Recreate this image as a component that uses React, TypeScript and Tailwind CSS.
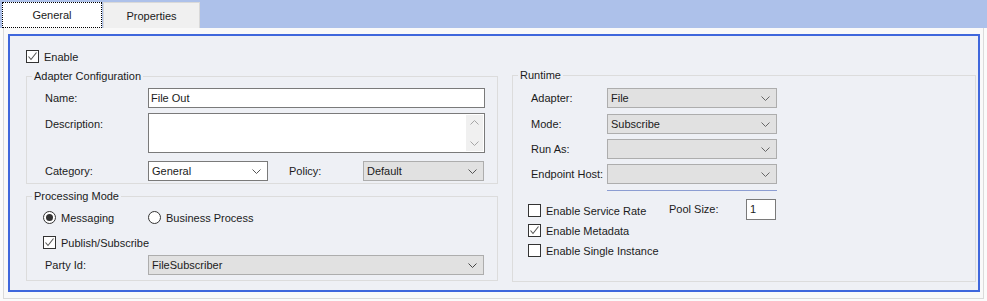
import React from "react";

const FONT = { fontFamily: '"Liberation Sans", Arial, sans-serif' };

function Chevron({ color = "#555" }: { color?: string }) {
    return (
        <svg width="9" height="5" viewBox="0 0 9 5" className="shrink-0">
            <path d="M0.5 0.5 L4.5 4.5 L8.5 0.5" fill="none" stroke={color} strokeWidth="1" />
        </svg>
    );
}

function Check({ checked }: { checked?: boolean }) {
    return (
        <span className="flex h-[13px] w-[13px] shrink-0 items-center justify-center border border-[#333] bg-white">
            {checked && (
                <svg width="11" height="11" viewBox="0 0 11 11">
                    <path d="M1.5 5.5 L4 8.5 L9.5 1.5" fill="none" stroke="#555" strokeWidth="1.1" />
                </svg>
            )}
        </span>
    );
}

function Radio({ checked }: { checked?: boolean }) {
    return (
        <span className="flex h-[13px] w-[13px] shrink-0 items-center justify-center rounded-full border border-[#333] bg-white">
            {checked && <span className="h-[7px] w-[7px] rounded-full bg-[#333]" />}
        </span>
    );
}

function Select({ value, width, disabled, chevron }: { value?: string; width: string; disabled?: boolean; chevron?: string }) {
    return (
        <div
            className={
                "flex h-[20px] items-center justify-between border pl-[3px] pr-[6px] " +
                width +
                (disabled ? " border-[#adadad] bg-[#e1e1e1]" : " border-[#7a7a7a] bg-white")
            }
        >
            <span className="leading-none">{value}</span>
            <Chevron color={chevron} />
        </div>
    );
}

function Group({ title, className, children }: { title: string; className: string; children: React.ReactNode }) {
    return (
        <fieldset className={"border border-[#dcdcdc] " + className}>
            <legend className="ml-[5px] px-[2px] text-[11px] leading-[16px]">{title}</legend>
            {children}
        </fieldset>
    );
}

export default function App() {
    return (
        <div className="h-[301px] w-[987px] overflow-hidden bg-[#fbfbfb] text-[11px] leading-[16px] text-[#1b1b1b]" style={FONT}>
            {/* Tabs */}
            <div className="flex h-[28px] items-end bg-[#adc1ea] pl-[2px]">
                <div className="flex h-[26px] w-[100px] items-center justify-center border border-dotted border-black bg-white">
                    General
                </div>
                <div className="ml-[1px] flex h-[26px] w-[97px] items-center justify-center border border-b-0 border-[#d9d9d9] bg-[#f0f0f0]">
                    Properties
                </div>
            </div>

            {/* Page */}
            <div className="ml-[3px] h-[271px] w-[981px] border border-t-0 border-[#dadada] bg-[#f9f9f9] pl-[4px] pt-[6px]">
                <div className="h-[258px] w-[972px] border-2 border-[#3f67dc] bg-[#eef0f5] pl-[16px] pt-[14px]">
                    <label className="flex h-[13px] items-center gap-[5px]">
                        <Check checked />
                        <span>Enable</span>
                    </label>

                    <div className="mt-[5px] flex gap-[14px]">
                        {/* Left column */}
                        <div className="flex w-[472px] flex-col gap-[4px]">
                            <Group title="Adapter Configuration" className="h-[116px]">
                                <div className="pl-[18px] pr-[12px] pt-[4px]">
                                    <div className="flex h-[20px] items-center">
                                        <span className="w-[103px]">Name:</span>
                                        <div className="flex h-[20px] flex-1 items-center border border-[#7a7a7a] bg-white pl-[2px]">File Out</div>
                                    </div>
                                    <div className="mt-[5px] flex">
                                        <span className="w-[103px] pt-[3px]">Description:</span>
                                        <div className="flex h-[40px] flex-1 justify-end border border-[#7a7a7a] bg-white p-[1px]">
                                            <div className="flex w-[17px] flex-col items-center justify-between bg-[#f0f0f0] py-[5px]">
                                                <svg width="9" height="5" viewBox="0 0 9 5">
                                                    <path d="M0.5 4.5 L4.5 0.5 L8.5 4.5" fill="none" stroke="#a6a6a6" />
                                                </svg>
                                                <svg width="9" height="5" viewBox="0 0 9 5">
                                                    <path d="M0.5 0.5 L4.5 4.5 L8.5 0.5" fill="none" stroke="#a6a6a6" />
                                                </svg>
                                            </div>
                                        </div>
                                    </div>
                                    <div className="mt-[8px] flex items-center">
                                        <span className="w-[103px]">Category:</span>
                                        <Select value="General" width="w-[120px]" />
                                        <span className="ml-[21px] w-[74px]">Policy:</span>
                                        <Select value="Default" width="w-[121px]" disabled />
                                    </div>
                                </div>
                            </Group>

                            <Group title="Processing Mode" className="h-[93px]">
                                <div className="pl-[16px] pr-[13px] pt-[7px]">
                                    <div className="flex h-[13px] items-center">
                                        <label className="flex w-[105px] items-center gap-[5px]">
                                            <Radio checked />
                                            <span>Messaging</span>
                                        </label>
                                        <label className="flex items-center gap-[5px]">
                                            <Radio />
                                            <span>Business Process</span>
                                        </label>
                                    </div>
                                    <label className="mt-[12px] flex h-[13px] items-center gap-[5px]">
                                        <Check checked />
                                        <span>Publish/Subscribe</span>
                                    </label>
                                    <div className="mt-[6px] flex items-center">
                                        <span className="w-[105px] pl-[2px]">Party Id:</span>
                                        <Select value="FileSubscriber" width="flex-1" disabled chevron="#444" />
                                    </div>
                                </div>
                            </Group>
                        </div>

                        {/* Right column */}
                        <Group title="Runtime" className="-mt-[1px] h-[215px] w-[464px]">
                            <div className="pl-[18px] pt-[5px]">
                                <div className="flex flex-col">
                                    {[
                                        ["Adapter:", "File", "mt-0"],
                                        ["Mode:", "Subscribe", "mt-[6px]"],
                                        ["Run As:", "", "mt-[5px]"],
                                        ["Endpoint Host:", "", "mt-[5px]"],
                                    ].map(([label, value, mt]) => (
                                        <div key={label} className={"flex items-center " + mt}>
                                            <span className="w-[76px] whitespace-nowrap">{label}</span>
                                            <Select value={value} width="w-[170px]" disabled chevron="#666" />
                                        </div>
                                    ))}
                                </div>
                                <div className="ml-[76px] mt-[6px] h-[1px] w-[170px] bg-[#8c9dd2]" />
                                <div className="mt-[8px] flex items-start">
                                    <div className="-ml-[3px] flex w-[141px] flex-col gap-[7px] pt-[5px]">
                                        {[
                                            ["Enable Service Rate", false],
                                            ["Enable Metadata", true],
                                            ["Enable Single Instance", false],
                                        ].map(([label, checked]) => (
                                            <label key={label as string} className="flex h-[13px] items-center gap-[5px] whitespace-nowrap">
                                                <Check checked={checked as boolean} />
                                                <span>{label as string}</span>
                                            </label>
                                        ))}
                                    </div>
                                    <div className="flex h-[20px] items-center">
                                        <span className="w-[77px]">Pool Size:</span>
                                        <div className="flex h-[21px] w-[30px] items-center border border-[#7a7a7a] bg-white pl-[3px]">1</div>
                                    </div>
                                </div>
                            </div>
                        </Group>
                    </div>
                </div>
            </div>
        </div>
    );
}
